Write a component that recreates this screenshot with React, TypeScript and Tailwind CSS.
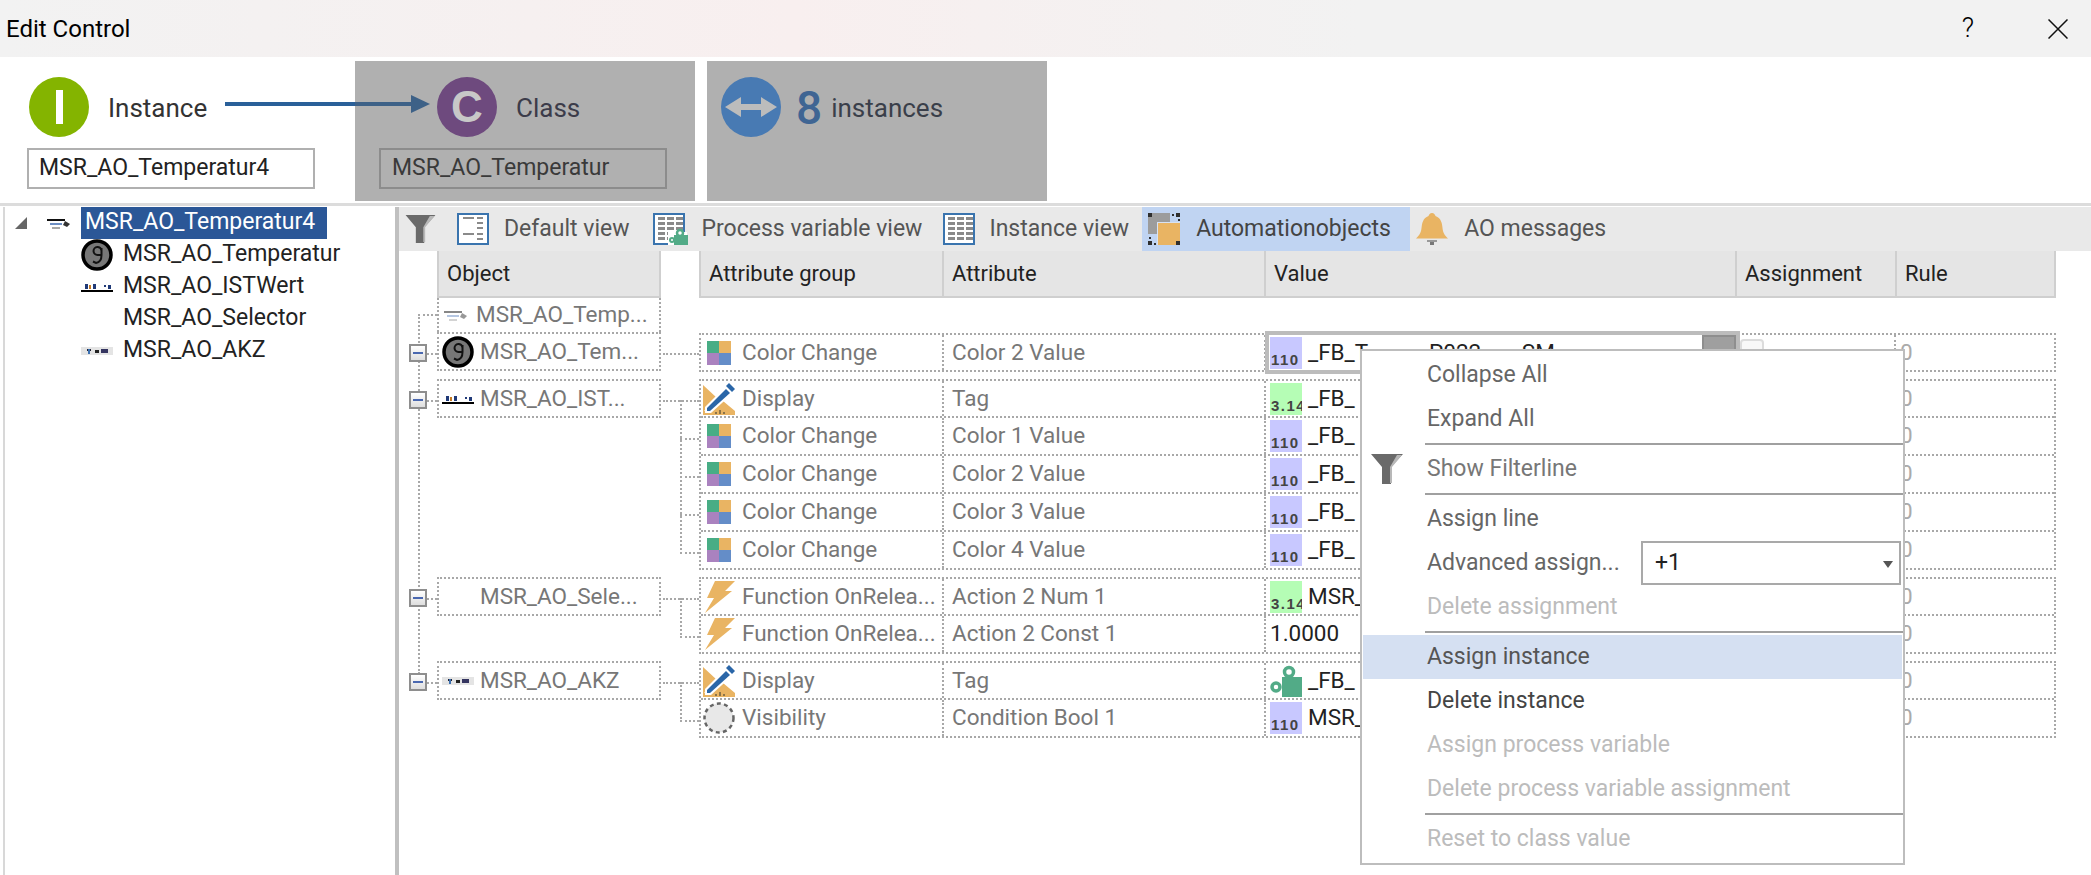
import React from "react";

const F = "font-[family-name:Roboto,sans-serif]";

function FunnelIcon({ className = "" }: { className?: string }) {
  return (
    <svg viewBox="0 0 32 30" className={className}>
      <path d="M0 0H32L20 13V30H11V13Z" fill="#6a6a6a" />
      <path d="M26 1L19 13V29H21V13L31 1Z" fill="#b8b8b8" />
    </svg>
  );
}
function DefaultViewIcon() {
  return (
    <svg width="32" height="32" viewBox="0 0 32 32" className="shrink-0">
      <rect x="1" y="1" width="30" height="30" fill="#fff" stroke="#3a74ae" strokeWidth="2" />
      <g fill="#8a8a8a">
        <rect x="6" y="4" width="11" height="2" />
        <rect x="20" y="4" width="6" height="2" />
        <rect x="20" y="9" width="6" height="2" />
        <rect x="20" y="14" width="6" height="2" />
        <rect x="6" y="20" width="11" height="2" />
        <rect x="20" y="20" width="6" height="2" />
        <rect x="20" y="25" width="6" height="2" />
      </g>
    </svg>
  );
}
function GridIcon({ lock = false }: { lock?: boolean }) {
  return (
    <svg width="32" height="32" viewBox="0 0 32 32" className="shrink-0 overflow-visible">
      <rect x="1" y="1" width="30" height="30" fill="#fff" stroke="#3a74ae" strokeWidth="2" />
      {[4, 9, 14, 19, 24].map((y) =>
        [5, 14, 23].map((x) => <rect key={x + "-" + y} x={x} y={y} width="7" height="3" fill="#8a8a8a" />)
      )}
      {lock && (
        <g>
          <rect x="15" y="19" width="19" height="13" fill="#fff" />
          <circle cx="27" cy="20" r="3" fill="#fff" stroke="#52ab87" strokeWidth="2.500" />
          <circle cx="19" cy="27" r="2" fill="#fff" stroke="#52ab87" strokeWidth="2" />
          <rect x="21" y="22" width="14" height="10" fill="#52ab87" />
        </g>
      )}
    </svg>
  );
}
function AutomationIcon() {
  return (
    <svg width="32" height="32" viewBox="0 0 32 32" className="shrink-0">
      <rect x="0" y="0" width="22" height="21" fill="#9c9c9c" />
      <rect x="9" y="9" width="23" height="23" fill="#d8e2f2" />
      <rect x="10" y="10" width="22" height="22" fill="#e9b463" />
      <g fill="#2f2f2f">
        <rect x="0" y="0" width="4" height="4" />
        <rect x="28" y="0" width="4" height="4" />
        <rect x="0" y="28" width="4" height="4" />
        <rect x="28" y="28" width="4" height="4" />
        <rect x="24" y="1" width="2" height="2" />
        <rect x="30" y="6" width="2" height="2" />
        <rect x="1" y="24" width="2" height="2" />
        <rect x="6" y="30" width="2" height="2" />
      </g>
    </svg>
  );
}
function BellIcon() {
  return (
    <svg width="32" height="32" viewBox="0 0 32 32" className="shrink-0">
      <path d="M16 0c2 0 3 1.500 3.500 3C25 5 26 10 26.500 15c.5 5 2 7 5.500 10.500H0C3.500 22 5 20 5.500 15 6 10 7 5 12.500 3 13 1.500 14 0 16 0Z" fill="#e9b463" />
      <rect x="11" y="27" width="10" height="2" fill="#999" />
      <rect x="14" y="29" width="4" height="3" fill="#777" />
    </svg>
  );
}
function CoinIcon({ size = 32 }: { size?: number }) {
  return (
    <svg width={size} height={size} viewBox="0 0 32 32" className="shrink-0">
      <circle cx="16" cy="16" r="14" fill="#777" stroke="#000" strokeWidth="3.500" />
      <path d="M20.500 11.500a4 4 0 1 0-4 4.500h4M20.500 9v7c0 5-2 7.500-5.500 8l-3-1.500" fill="none" stroke="#111" strokeWidth="2" />
    </svg>
  );
}
function TemperIcon({ faded = false }: { faded?: boolean }) {
  return (
    <svg width="24" height="11" viewBox="0 0 24 11" className={"shrink-0 " + (faded ? "opacity-50" : "")}>
      <rect x="0" y="1" width="18" height="2" fill="#111" />
      <rect x="3" y="5" width="12" height="2" fill="#6d8fc4" />
      <rect x="5" y="9" width="8" height="2" fill="#a8a8a8" />
      <path d="M18 3l5 3-3 3-4-2Z" fill="#333" />
    </svg>
  );
}
function IstIcon() {
  return (
    <svg width="32" height="12" viewBox="0 0 32 12" className="shrink-0">
      <rect x="0" y="9" width="32" height="2" fill="#000" />
      <rect x="4" y="3" width="3" height="5" fill="#203a78" />
      <rect x="8" y="4" width="2" height="4" fill="#c47a22" />
      <rect x="12" y="3" width="3" height="5" fill="#203a78" />
      <rect x="23" y="4" width="2" height="2" fill="#203a78" />
      <rect x="27" y="4" width="3" height="4" fill="#203a78" />
    </svg>
  );
}
function AkzIcon() {
  return (
    <svg width="32" height="8" viewBox="0 0 32 8" className="shrink-0">
      <rect width="32" height="8" fill="#e4e4e4" />
      <rect x="6" y="2" width="4" height="2" fill="#223" />
      <rect x="7" y="2" width="2" height="5" fill="#3a6fb0" />
      <rect x="14" y="3" width="4" height="3" fill="#222" />
      <rect x="20" y="2" width="7" height="4" fill="#353560" />
    </svg>
  );
}
function ColorIcon() {
  return (
    <div className="mr-[11px] ml-[6px] grid h-[24px] w-[24px] shrink-0 grid-cols-2 grid-rows-2">
      <div className="bg-[#48ad85]" />
      <div className="bg-[#e9b463]" />
      <div className="bg-[#aa82bf]" />
      <div className="bg-[#648dc8]" />
    </div>
  );
}
function DisplayIcon() {
  return (
    <svg width="32" height="32" viewBox="0 0 32 32" className="mr-[7px] ml-[2px] shrink-0">
      <path d="M0 2L14 15 1 28H0Z" fill="#e9b463" />
      <path d="M0 28H4L20 18 32 28V32H0Z" fill="#e9b463" />
      <path d="M2 30V24L23 3 30 10 8 30Z" fill="#fff" />
      <path d="M4 28V25L23 6 27 10 7 28Z" fill="#2a66a8" />
      <path d="M26 0L32 6 29 9 23 3Z" fill="#2a66a8" />
      <path d="M12 29h2v2h-2ZM16 27h2v4h-2ZM20 29h2v2h-2Z" fill="#8c7448" />
    </svg>
  );
}
function BoltIcon() {
  return (
    <svg width="32" height="32" viewBox="0 0 32 32" className="mr-[7px] ml-[2px] shrink-0">
      <path d="M12 0H32L22 10H29L2 32 11 17H4Z" fill="#e9b463" />
    </svg>
  );
}
function VisibilityIcon() {
  return (
    <svg width="32" height="32" viewBox="0 0 32 32" className="mr-[7px] ml-[2px] shrink-0">
      <circle cx="16" cy="16" r="14.500" fill="#e8e8e8" stroke="#666" strokeWidth="2.500" strokeDasharray="4 3.300" />
    </svg>
  );
}
function NumberIcon({ label, bg }: { label: string; bg: string }) {
  return (
    <div className={"relative mr-[6px] h-[32px] w-[32px] shrink-0 overflow-hidden " + bg}>
      <span className="absolute bottom-[1px] left-[1px] font-[family-name:'Liberation_Sans',sans-serif] text-[15px] leading-[16px] font-bold tracking-[1.500px] whitespace-nowrap text-[#444]">
        {label}
      </span>
    </div>
  );
}
function PuzzleIcon() {
  return (
    <svg width="32" height="32" viewBox="0 0 32 32" className="mr-[6px] shrink-0">
      <circle cx="19" cy="7" r="4.500" fill="#fff" stroke="#52ab87" strokeWidth="3.500" />
      <circle cx="6" cy="22" r="4" fill="#fff" stroke="#52ab87" strokeWidth="3.500" />
      <rect x="12" y="12" width="20" height="20" fill="#52ab87" />
    </svg>
  );
}

type AttrRow = { icon: React.ReactNode; group: string; attr: string; valIcon: React.ReactNode; value: string };

const N110 = <NumberIcon label="110" bg="bg-[#c8c8ff]" />;
const N314 = <NumberIcon label="3.14" bg="bg-[#b5fdb5]" />;
const colorRow = (attr: string): AttrRow => ({
  icon: <ColorIcon />,
  group: "Color Change",
  attr,
  valIcon: N110,
  value: "_FB_",
});

const groups: {
  obj: string;
  icon: React.ReactNode;
  gap: string;
  rows: AttrRow[];
}[] = [
  {
    obj: "MSR_AO_Tem...",
    icon: <CoinIcon />,
    gap: "mt-[0px]",
    rows: [colorRow("Color 2 Value")],
  },
  {
    obj: "MSR_AO_IST...",
    icon: <IstIcon />,
    gap: "mt-[7px]",
    rows: [
      { icon: <DisplayIcon />, group: "Display", attr: "Tag", valIcon: N314, value: "_FB_" },
      colorRow("Color 1 Value"),
      colorRow("Color 2 Value"),
      colorRow("Color 3 Value"),
      colorRow("Color 4 Value"),
    ],
  },
  {
    obj: "MSR_AO_Sele...",
    icon: <div className="h-[32px] w-[32px] shrink-0" />,
    gap: "mt-[7px]",
    rows: [
      { icon: <BoltIcon />, group: "Function OnRelea...", attr: "Action 2 Num 1", valIcon: N314, value: "MSR_" },
      { icon: <BoltIcon />, group: "Function OnRelea...", attr: "Action 2 Const 1", valIcon: null, value: "1.0000" },
    ],
  },
  {
    obj: "MSR_AO_AKZ",
    icon: <AkzIcon />,
    gap: "mt-[7px]",
    rows: [
      { icon: <DisplayIcon />, group: "Display", attr: "Tag", valIcon: <PuzzleIcon />, value: "_FB_" },
      { icon: <VisibilityIcon />, group: "Visibility", attr: "Condition Bool 1", valIcon: N110, value: "MSR_" },
    ],
  },
];

const dot = "border-dotted border-[#a8a8a8]";

function Expander() {
  return (
    <>
      <div className={"absolute top-[19px] left-[-15px] w-[13px] border-t-2 " + dot} />
      <div className="absolute top-[10px] left-[-30px] z-10 flex h-[18px] w-[18px] items-center justify-center border-2 border-[#8e8e8e] bg-[linear-gradient(#fff,#dedede)]">
        <div className="h-[2px] w-[10px] bg-[#4a68b0]" />
      </div>
    </>
  );
}

function AttrCells({ row, first, selected }: { row: AttrRow; first: boolean; selected: boolean }) {
  return (
    <div className={"flex w-full " + (first ? "h-[35px]" : "h-[38px] border-t-2 " + dot)}>
      <div className={"flex w-[243px] shrink-0 items-center overflow-hidden border-r-2 whitespace-nowrap text-[#777] " + dot}>
        {row.icon}
        <span>{row.group}</span>
      </div>
      <div className={"flex w-[322px] shrink-0 items-center border-r-2 pl-[8px] whitespace-nowrap text-[#777] " + dot}>{row.attr}</div>
      <div
        className={
          "relative flex w-[471px] shrink-0 items-center overflow-visible pl-[4px] whitespace-nowrap text-[#222] " +
          (selected ? "" : "border-r-2 " + dot)
        }
      >
        {selected && (
          <div className="absolute top-[-4px] right-[-3px] bottom-[-4px] left-[-1px] z-[1] border-[4px] border-[#bcbcbc] bg-white">
            <div className="absolute top-[0px] right-[0px] h-[36px] w-[34px] border-2 border-[#8e8e8e] bg-[#9f9f9f]" />
          </div>
        )}
        <div className="relative z-[2] flex items-center">
          {row.valIcon}
          <span>{selected ? "_FB_T______P022____SM" : row.value}</span>
        </div>
      </div>
      <div className={"relative w-[159px] shrink-0 border-r-2 " + dot}>
        {selected && <div className="absolute top-[4px] left-[3px] z-[2] h-[24px] w-[24px] rounded-[4px] border-2 border-[#dcdcdc] bg-[#f8f8f8]" />}
      </div>
      <div className="flex flex-1 items-center pl-[4px] text-[#aaa]">0</div>
    </div>
  );
}

function MenuItem({ label, tone = "text-[#666]", active = false }: { label: string; tone?: string; active?: boolean }) {
  return (
    <div className={"flex h-[44px] items-center pl-[64px] whitespace-nowrap " + tone + (active ? " bg-[#d5e0f2]" : "")}>{label}</div>
  );
}
function MenuSep() {
  return <div className="my-[2px] mr-[-1px] ml-[62px] h-[2px] bg-[#a0a0a0]" />;
}

const OFF = "text-[#bcbcbc]";

function ContextMenu() {
  return (
    <div className="absolute top-[349px] left-[1360px] z-20 h-[516px] w-[545px] border-2 border-[#bdbdbd] bg-white px-[1px] py-[2px] text-[23px]">
      <MenuItem label="Collapse All" />
      <MenuItem label="Expand All" />
      <MenuSep />
      <div className="relative">
        <FunnelIcon className="absolute top-[7px] left-[8px] h-[30px] w-[32px]" />
        <MenuItem label="Show Filterline" tone="text-[#777]" />
      </div>
      <MenuSep />
      <MenuItem label="Assign line" tone="text-[#666]" />
      <div className="flex h-[44px] items-center">
        <div className="w-[278px] shrink-0 pl-[64px] whitespace-nowrap text-[#666]">Advanced assign...</div>
        <div className="relative flex h-[44px] w-[260px] items-center border-2 border-[#a9a9a9] bg-white pl-[12px] text-[#222]">
          +1
          <svg width="10" height="7" viewBox="0 0 10 7" className="absolute top-[18px] right-[6px]">
            <path d="M0 0H10L5 7Z" fill="#555" />
          </svg>
        </div>
      </div>
      <MenuItem label="Delete assignment" tone={OFF} />
      <MenuSep />
      <MenuItem label="Assign instance" tone="text-[#555]" active />
      <MenuItem label="Delete instance" tone="text-[#444]" />
      <MenuItem label="Assign process variable" tone={OFF} />
      <MenuItem label="Delete process variable assignment" tone={OFF} />
      <MenuSep />
      <MenuItem label="Reset to class value" tone={OFF} />
    </div>
  );
}

export default function App() {
  return (
    <div className={"relative flex h-[875px] w-[2091px] flex-col overflow-hidden bg-white text-[23px] text-[#222] " + F}>
      {/* title bar */}
      <div className="flex h-[57px] shrink-0 items-center justify-between bg-[linear-gradient(90deg,#f2f2f2,#f8efef_38%,#f2f2f2_65%)] pr-[23px] pl-[6px] text-[24px] text-black">
        <span>Edit Control</span>
        <div className="flex items-center gap-[74px]">
          <span className="text-[27px] font-light">?</span>
          <svg width="20" height="20" viewBox="0 0 20 20">
            <path d="M.5.5L19.500 19.500M19.500.5L.5 19.500" stroke="#111" strokeWidth="1.500" fill="none" />
          </svg>
        </div>
      </div>

      {/* instance / class strip */}
      <div className="relative flex h-[146px] shrink-0 pt-[4px]">
        <div className="w-[355px] shrink-0 pt-[16px] pl-[27px]">
          <div className="flex items-center pl-[2px]">
            <div className="flex h-[60px] w-[60px] items-center justify-center rounded-full bg-[#84b400]">
              <div className="h-[34px] w-[7px] bg-white" />
            </div>
            <span className="mt-[3px] ml-[19px] text-[26px] text-[#333]">Instance</span>
          </div>
          <div className="mt-[11px] flex h-[41px] w-[288px] items-center border-2 border-[#b0b0b0] pl-[10px] text-[#222]">MSR_AO_Temperatur4</div>
        </div>
        <div className="h-[140px] w-[340px] shrink-0 bg-[#b0b0b0] pt-[16px] pl-[24px]">
          <div className="flex items-center pl-[58px]">
            <div className="flex h-[60px] w-[60px] items-center justify-center rounded-full bg-[#6e4a7e]">
              <span className="font-[family-name:'Liberation_Sans',sans-serif] text-[44px] leading-none font-bold text-[#c8c8c8]">C</span>
            </div>
            <span className="mt-[3px] ml-[19px] text-[26px] text-[#3c3c4a]">Class</span>
          </div>
          <div className="mt-[11px] flex h-[41px] w-[288px] items-center border-2 border-[#8c8c8c] pl-[11px] text-[#3a3a3a]">MSR_AO_Temperatur</div>
        </div>
        <div className="ml-[12px] flex h-[140px] w-[340px] shrink-0 items-start bg-[#b0b0b0] pt-[16px] pl-[14px]">
          <svg width="60" height="60" viewBox="0 0 60 60" className="shrink-0">
            <circle cx="30" cy="30" r="30" fill="#487ab3" />
            <path d="M4 30L20 20V27H40V20L56 30 40 40V33H20V40Z" fill="#bcbcbc" />
          </svg>
          <span className="mt-[6px] ml-[15px] text-[46px] leading-[50px] font-medium text-[#3f6593]">8</span>
          <span className="mt-[15px] ml-[9px] text-[26px] leading-[32px] text-[#3a3f4a]">instances</span>
        </div>
        <svg width="215" height="22" viewBox="0 0 215 22" className="absolute top-[36px] left-[225px]">
          <rect x="0" y="9" width="130" height="4" fill="#2a6099" />
          <rect x="130" y="9" width="60" height="4" fill="#3d6187" />
          <path d="M186 2L205 11 186 20Z" fill="#3d6187" />
        </svg>
      </div>

      {/* body */}
      <div className="flex min-h-0 flex-1 border-t-[3px] border-[#dcdcdc] pt-[1px]">
        {/* tree */}
        <div className="ml-[3px] w-[396px] shrink-0 border-r-4 border-l-2 border-r-[#c0c0c0] border-l-[#d8d8d8]">
          <div className="flex h-[32px] items-center">
            <div className="ml-[10px] h-0 w-0 border-b-[12px] border-l-[12px] border-b-[#666] border-l-transparent" />
            <div className="ml-[20px]">
              <TemperIcon />
            </div>
            <div className="ml-[10px] flex h-[32px] w-[246px] items-center bg-[#2b5797] pb-[2px] pl-[4px] text-white">MSR_AO_Temperatur4</div>
          </div>
          {[
            { n: "MSR_AO_Temperatur", i: <CoinIcon /> },
            { n: "MSR_AO_ISTWert", i: <IstIcon /> },
            { n: "MSR_AO_Selector", i: null },
            { n: "MSR_AO_AKZ", i: <AkzIcon /> },
          ].map((r) => (
            <div key={r.n} className="flex h-[32px] items-center pl-[76px]">
              <div className="flex w-[42px] items-center">{r.i}</div>
              <span className="pb-[2px]">{r.n}</span>
            </div>
          ))}
        </div>

        {/* right */}
        <div className="min-w-0 flex-1">
          <div className="flex h-[44px] items-center bg-[#e9e9e9] whitespace-nowrap text-[#555]">
            <FunnelIcon className="mr-[21px] ml-[6px] h-[28px] w-[31px]" />
            <DefaultViewIcon />
            <span className="ml-[15px]">Default view</span>
            <div className="ml-[23px]">
              <GridIcon lock />
            </div>
            <span className="ml-[17px]">Process variable view</span>
            <div className="ml-[21px]">
              <GridIcon />
            </div>
            <span className="ml-[14px]">Instance view</span>
            <div className="ml-[13px] flex h-[44px] w-[268px] items-center bg-[#c0d4f2] pl-[6px] text-[#444]">
              <AutomationIcon />
              <span className="ml-[16px]">Automationobjects</span>
            </div>
            <div className="ml-[6px]">
              <BellIcon />
            </div>
            <span className="ml-[16px]">AO messages</span>
          </div>

          {/* column headers */}
          <div className="flex h-[47px] items-start text-[22px]">
            <div className="ml-[38px] flex h-[47px] w-[224px] items-center border-x-2 border-b-2 border-[#cfcfcf] bg-[#e5e5e5] pl-[8px] text-[#222]">Object</div>
            <div className="ml-[38px] flex h-[47px] w-[1357px] border-x-2 border-b-2 border-[#cfcfcf] bg-[#e5e5e5] text-[#222]">
              <div className="flex w-[243px] items-center border-r-2 border-[#cfcfcf] pl-[8px]">Attribute group</div>
              <div className="flex w-[322px] items-center border-r-2 border-[#cfcfcf] pl-[8px]">Attribute</div>
              <div className="flex w-[471px] items-center border-r-2 border-[#cfcfcf] pl-[8px]">Value</div>
              <div className="flex w-[160px] items-center border-r-2 border-[#cfcfcf] pl-[8px]">Assignment</div>
              <div className="flex items-center pl-[8px]">Rule</div>
            </div>
          </div>

          {/* rows */}
          <div className="relative ml-[38px] text-[22.500px] text-[#777]">
            <div className={"relative flex h-[34px] w-[224px] items-center border-x-2 pl-[5px] " + dot}>
              <div className={"absolute top-[16px] left-[-21px] w-[19px] border-t-2 " + dot} />
              <TemperIcon faded />
              <span className="ml-[8px]">MSR_AO_Temp...</span>
            </div>
            {/* trunk line */}
            <div className={"absolute top-[16px] left-[-19px] h-[360px] border-l-2 " + dot} />
            {groups.map((g, gi) => (
              <div key={g.obj} className={"relative flex items-start " + g.gap}>
                <div className={"relative flex h-[39px] w-[224px] shrink-0 items-center border-2 pl-[3px] " + dot}>
                  <Expander />
                  {g.icon}
                  <span className="ml-[6px] whitespace-nowrap">{g.obj}</span>
                </div>
                {/* connectors */}
                <div className={"absolute top-[21px] left-[226px] w-[36px] border-t-2 " + dot} />
                {g.rows.length > 1 && (
                  <div
                    className={"absolute top-[21px] left-[243px] border-l-2 " + dot}
                    style={{ height: (g.rows.length - 1) * 38 + 2 }}
                  />
                )}
                {g.rows.slice(1).map((_, i) => (
                  <div
                    key={i}
                    className={"absolute left-[243px] w-[19px] border-t-2 " + dot}
                    style={{ top: 21 + (i + 1) * 38 }}
                  />
                ))}
                <div className={"ml-[38px] w-[1357px] border-2 " + (gi === 0 ? "mt-[1px] " : "") + dot}>
                  {g.rows.map((r, i) => (
                    <AttrCells key={i} row={r} first={i === 0} selected={gi === 0 && i === 0} />
                  ))}
                </div>
              </div>
            ))}
          </div>
        </div>
      </div>

      <ContextMenu />
    </div>
  );
}
